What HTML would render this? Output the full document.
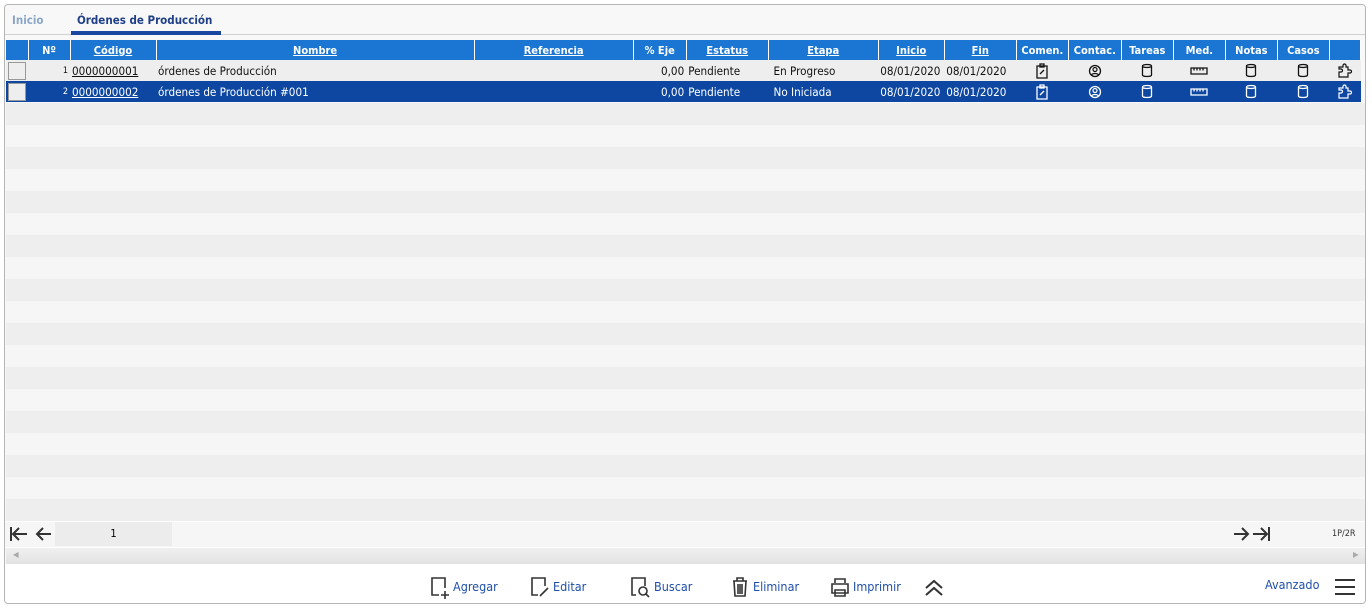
<!DOCTYPE html>
<html><head><meta charset="utf-8"><style>
*{box-sizing:border-box;margin:0;padding:0}
body{width:1372px;height:610px;background:#fff;font-family:"DejaVu Sans Condensed","Liberation Sans",sans-serif;font-size:11.6px;position:relative;overflow:hidden}
.frame{position:absolute;left:4px;top:4px;width:1362px;height:600px;border:1px solid #b5b5b5;border-radius:4px;background:#f8f8f8;overflow:hidden}
.tabs{position:absolute;left:0;top:0;width:100%;height:30px;border-bottom:1px solid #d0d0d0;background:#f8f8f8}
.tab{position:absolute;top:8px;font-weight:bold;font-size:11.5px}
.a{position:absolute}
table{position:absolute;left:1px;top:35px;border-collapse:collapse;table-layout:fixed;width:1355px}
td,th{height:21px;padding:0 2px;white-space:nowrap;overflow:hidden}
th{background:#1a76d2;color:#fff;font-weight:bold;font-size:11px;border-right:1px solid #fff;text-decoration:underline;height:20px}
th.nu{text-decoration:none}
.r1 td{background:#eee;color:#111}
.r2 td{background:#0d47a1;color:#fff}
.cb{display:inline-block;width:18px;height:18px;border:1px solid #999;background:#eee;vertical-align:middle}
.ic{text-align:center;line-height:0}
.ic svg{vertical-align:middle}
.stripe{position:absolute;left:1px;width:1360px;height:22px}
.btn{position:absolute;top:570px;color:#1f4fa8;font-size:12.5px}
</style></head><body>
<svg width="0" height="0" style="position:absolute">
<defs>
<symbol id="clip" viewBox="0 0 14 16"><path d="M2 3h10v12H2zM5 1h4v3H5zM5 11l4-4" fill="none" stroke="currentColor" stroke-width="1.3"/></symbol>
<symbol id="user" viewBox="0 0 14 14"><circle cx="7" cy="7" r="5.5" fill="none" stroke="currentColor" stroke-width="1.3"/><circle cx="7" cy="5.5" r="2" fill="none" stroke="currentColor" stroke-width="1.2"/><path d="M3.5 11c1-2 6-2 7 0" fill="none" stroke="currentColor" stroke-width="1.2"/></symbol>
<symbol id="db" viewBox="0 0 12 15"><path d="M1.5 3v9c0 2 9 2 9 0V3M1.5 3c0-2 9-2 9 0 0 2-9 2-9 0" fill="none" stroke="currentColor" stroke-width="1.3"/></symbol>
<symbol id="ruler" viewBox="0 0 18 8"><path d="M1 1h16v6H1zM4 1v2.5M7 1v2.5M10 1v2.5M13 1v2.5" fill="none" stroke="currentColor" stroke-width="1.3"/></symbol>
<symbol id="puz" viewBox="0 0 16 16"><path d="M2 14V9h2a1.5 1.5 0 0 0 0-3H2V4h4V2.5a1.5 1.5 0 0 1 3 0V4h2v3h2a1.5 1.5 0 0 1 0 3h-2v4z" fill="none" stroke="currentColor" stroke-width="1.2"/></symbol>
</defs></svg>
<div class="frame">
<div class="tabs">
<span class="tab" style="left:7px;color:#8aa7c8">Inicio</span>
<span class="tab" style="left:72px;color:#1f3f86">Órdenes de Producción</span>
<div class="a" style="left:66px;top:26px;width:150px;height:4px;background:#1a47a0"></div>
</div>
<div id="st"></div>
<table>
<colgroup><col style="width:22px"><col style="width:42px"><col style="width:86px"><col style="width:318px"><col style="width:159px"><col style="width:53px"><col style="width:82px"><col style="width:110px"><col style="width:66px"><col style="width:72px"><col style="width:52px"><col style="width:53px"><col style="width:52px"><col style="width:52px"><col style="width:52px"><col style="width:52px"><col style="width:31px"></colgroup>
<tr><th class="nu"></th><th class="nu">Nº</th><th>Código</th><th>Nombre</th><th>Referencia</th><th class="nu">% Eje</th><th>Estatus</th><th>Etapa</th><th>Inicio</th><th>Fin</th><th class="nu">Comen.</th><th class="nu">Contac.</th><th class="nu">Tareas</th><th class="nu">Med.</th><th class="nu">Notas</th><th class="nu">Casos</th><th class="nu"></th></tr>
<tr class="r1"><td><span class="cb"></span></td><td style="text-align:right;font-size:9px">1</td><td><u>0000000001</u></td><td>órdenes de Producción</td><td></td><td style="text-align:right">0,00</td><td>Pendiente</td><td>&nbsp;En Progreso</td><td>08/01/2020</td><td>08/01/2020</td><td class="ic"><svg width="14" height="16"><use href="#clip"/></svg></td><td class="ic"><svg width="14" height="14"><use href="#user"/></svg></td><td class="ic"><svg width="12" height="15"><use href="#db"/></svg></td><td class="ic"><svg width="18" height="8"><use href="#ruler"/></svg></td><td class="ic"><svg width="12" height="15"><use href="#db"/></svg></td><td class="ic"><svg width="12" height="15"><use href="#db"/></svg></td><td class="ic"><svg width="16" height="16"><use href="#puz"/></svg></td></tr>
<tr class="r2"><td><span class="cb"></span></td><td style="text-align:right;font-size:9px">2</td><td><u>0000000002</u></td><td>órdenes de Producción #001</td><td></td><td style="text-align:right">0,00</td><td>Pendiente</td><td>&nbsp;No Iniciada</td><td>08/01/2020</td><td>08/01/2020</td><td class="ic"><svg width="14" height="16"><use href="#clip"/></svg></td><td class="ic"><svg width="14" height="14"><use href="#user"/></svg></td><td class="ic"><svg width="12" height="15"><use href="#db"/></svg></td><td class="ic"><svg width="18" height="8"><use href="#ruler"/></svg></td><td class="ic"><svg width="12" height="15"><use href="#db"/></svg></td><td class="ic"><svg width="12" height="15"><use href="#db"/></svg></td><td class="ic"><svg width="16" height="16"><use href="#puz"/></svg></td></tr>
</table>
<div class="a" style="left:1px;top:516px;width:1360px;height:26px;background:#f6f6f6;border-top:1px solid #fff"></div>
<div class="a" style="left:50px;top:517px;width:117px;height:24px;background:#ececec;text-align:center;line-height:24px;font-size:11px">1</div>
<svg class="a" style="left:5px;top:521px" width="44" height="16" fill="none" stroke="#333" stroke-width="2"><path d="M1 1v14M3 8h14M9 2L3 8l6 6M27 8h14M33 2l-6 6 6 6"/></svg>
<svg class="a" style="left:1228px;top:521px" width="44" height="16" fill="none" stroke="#333" stroke-width="2"><path d="M1 8h14M9 2l6 6-6 6M20 8h14M28 2l6 6-6 6M36 1v14"/></svg>
<div class="a" style="left:1327px;top:524px;font-size:9px;color:#333">1P/2R</div>
<div class="a" style="left:1px;top:542px;width:1360px;height:17px;background:linear-gradient(#f0f0f0,#e2e2e2);border-top:1px solid #fff"></div>
<div class="a" style="left:8px;top:545px;font-size:8px;color:#aaa">◀</div>
<div class="a" style="left:1348px;top:545px;font-size:8px;color:#aaa">▶</div>
<div class="a" style="left:0;top:559px;width:1362px;height:41px;background:#fff"></div>
</div>
<svg class="a" style="left:430px;top:576px" width="20" height="24" fill="none" stroke="#333" stroke-width="1.6"><path d="M9 19H2V2h13v10M15 15v8M11 19h8"/></svg>
<span class="btn" style="left:453px;top:579px">Agregar</span>
<svg class="a" style="left:530px;top:576px" width="22" height="22" fill="none" stroke="#333" stroke-width="1.6"><path d="M8 19H2V2h13v8M10 20l8-8"/></svg>
<span class="btn" style="left:553px;top:579px">Editar</span>
<svg class="a" style="left:630px;top:576px" width="22" height="24" fill="none" stroke="#333" stroke-width="1.6"><path d="M6 19H2V2h13v8"/><circle cx="13" cy="15" r="4"/><path d="M16 18l3 3"/></svg>
<span class="btn" style="left:654px;top:579px">Buscar</span>
<svg class="a" style="left:731px;top:576px" width="18" height="22" fill="none" stroke="#333" stroke-width="1.6"><path d="M2 5h14M6 5V2h6v3M3 5l1 15h10l1-15M7 8v10M9 8v10M11 8v10"/></svg>
<span class="btn" style="left:753px;top:579px">Eliminar</span>
<svg class="a" style="left:830px;top:577px" width="20" height="22" fill="none" stroke="#333" stroke-width="1.6"><path d="M5 6V2h10v4M2 7h16v9H2zM5 13h10v6H5z"/></svg>
<span class="btn" style="left:853px;top:579px">Imprimir</span>
<svg class="a" style="left:924px;top:579px" width="20" height="18" fill="none" stroke="#333" stroke-width="2"><path d="M2 9l8-7 8 7M2 16l8-7 8 7"/></svg>
<span class="btn" style="left:1265px;top:577px">Avanzado</span>
<svg class="a" style="left:1334px;top:578px" width="22" height="18" stroke="#333" stroke-width="2"><path d="M1 2h20M1 9h20M1 16h20"/></svg>
<script>
var s='';for(var i=0;i<19;i++){var y=98+i*22;s+='<div class="stripe" style="top:'+y+'px;background:'+(i%2?'#f6f6f6':'#eeeeee')+'"></div>';}
document.getElementById('st').innerHTML=s;
</script>
</body></html>
